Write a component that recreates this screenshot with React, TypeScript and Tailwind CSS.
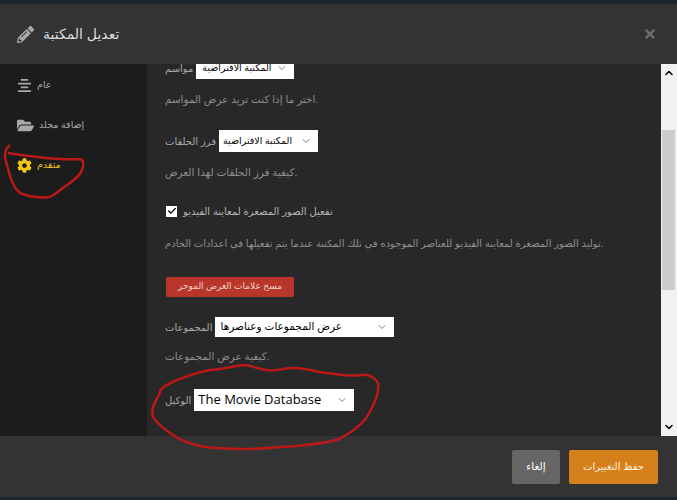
import { FaAlignCenter, FaCog, FaFolderOpen, FaPencilAlt, FaTimes } from 'react-icons/fa';
import { ChevronDown, ChevronUp, Check } from 'lucide-react';

function FakeSelect({ label, value, className, textClass }: { label: string; value: string; className: string; textClass: string }) {
  return (
    <div className="flex items-center gap-[3px]">
      <span className="whitespace-nowrap text-[10px] text-[#a9a9a9]">{label}</span>
      <div className={`flex items-center justify-between bg-white pr-[6px] text-black ${className}`}>
        <span className={`whitespace-nowrap ${textClass}`}>{value}</span>
        <ChevronDown className="h-3 w-3 text-[#555]" strokeWidth={1.5} />
      </div>
    </div>
  );
}

function SideItem({ icon, label, active }: { icon: React.ReactNode; label: string; active?: boolean }) {
  return (
    <div className={`flex h-[40px] items-center gap-[5px] pl-[17px] text-[9.5px] ${active ? 'text-[#f5c518]' : 'text-[#a9a9a9]'}`}>
      {icon}
      <span>{label}</span>
    </div>
  );
}

function Hint({ text, className }: { text: string; className: string }) {
  return <p className={`h-[16px] whitespace-nowrap leading-[16px] text-[#8f8f8f] ${className}`}>{text}</p>;
}

export default function App() {
  return (
    <div className="relative flex h-[500px] w-[677px] flex-col overflow-hidden bg-[#1a2530] font-['Liberation_Sans','DejaVu_Sans',sans-serif]">
      <div className="mt-[4px] flex h-[60px] shrink-0 items-center justify-between bg-[#333333] pl-[17px] pr-[20px]">
        <div className="flex items-center gap-[9px]">
          <FaPencilAlt className="h-[17px] w-[17px] text-[#a9a9a9]" />
          <span className="text-[14px] text-[#dcdcdc]">تعديل المكتبة</span>
        </div>
        <FaTimes className="h-[14px] w-[14px] text-[#6e6e6e]" />
      </div>

      <div className="flex h-[372px] shrink-0">
        <div className="flex w-[147px] shrink-0 flex-col bg-[#1c1c1c] pt-[1px]">
          <SideItem icon={<FaAlignCenter className="h-[15px] w-[15px] text-[#a9a9a9]" />} label="عام" />
          <SideItem icon={<FaFolderOpen className="h-[17px] w-[17px] text-[#a9a9a9]" />} label="إضافة مجلد" />
          <SideItem active icon={<FaCog className="h-[15px] w-[15px] text-[#f5c518]" />} label="متقدم" />
        </div>

        <div className="flex-1 overflow-hidden bg-[#282828] pl-[18px]">
          <div className="-mt-[7px] flex flex-col items-start">
            <FakeSelect label="مواسم" value="المكتبة الافتراضية" className="h-[22px] w-[98px] pl-[6px]" textClass="text-[9.5px]" />
            <Hint className="mt-[13px] text-[10.4px]" text="اختر ما إذا كنت تريد عرض المواسم." />
            <div className="mt-[22px]">
              <FakeSelect label="فرز الحلقات" value="المكتبة الافتراضية" className="h-[22px] w-[99px] pl-[4px]" textClass="text-[9.5px]" />
            </div>
            <Hint className="mt-[13px] text-[10.4px]" text="كيفية فرز الحلقات لهذا العرض." />
            <div className="mt-[22px] ml-[1px] flex h-[16px] items-center gap-[6px]">
              <div className="flex h-[11px] w-[11px] items-center justify-center bg-white">
                <Check className="h-[10px] w-[10px] text-black" strokeWidth={3} />
              </div>
              <span className="text-[10px] text-[#b5b5b5]">تفعيل الصور المصغرة لمعاينة الفيديو</span>
            </div>
            <Hint className="mt-[17px] text-[10px]" text="توليد الصور المصغرة لمعاينة الفيديو للعناصر الموجوده في تلك المكتبة عندما يتم تفعيلها في اعدادات الخادم." />
            <button className="mt-[25px] ml-[1px] flex h-[20px] w-[128px] items-center justify-center rounded-[2px] bg-[#b8372a] text-[9px] text-[#f0d0c8]">
              مسح علامات العرض الموجز
            </button>
            <div className="mt-[20px]">
              <FakeSelect label="المجموعات" value="عرض المجموعات وعناصرها" className="h-[20px] w-[179px] pl-[5px]" textClass="text-[10.5px]" />
            </div>
            <Hint className="mt-[12px] text-[10.4px]" text="كيفية عرض المجموعات." />
            <div className="mt-[24px]">
              <FakeSelect label="الوكيل" value="The Movie Database" className="h-[22px] w-[160px] pl-[4px]" textClass="font-['Open_Sans',sans-serif] text-[13px]" />
            </div>
          </div>
        </div>

        <div className="flex w-[16px] shrink-0 flex-col items-center justify-between bg-[#f1f1f1] py-[3px]">
          <ChevronUp className="h-3 w-3 text-black" strokeWidth={3} />
          <ChevronDown className="h-3 w-3 text-black" strokeWidth={3} />
        </div>
      </div>

      <div className="flex h-[61px] shrink-0 items-center justify-end gap-[9px] bg-[#333333] pr-[19px]">
        <button className="flex h-[34px] w-[48px] items-center justify-center rounded-[2px] bg-[#666666] text-[10.5px] text-white">إلغاء</button>
        <button className="flex h-[34px] w-[89px] items-center justify-center rounded-[2px] bg-[#d6801c] text-[10px] text-[#fff3dc]">حفظ التغييرات</button>
      </div>

      <div className="absolute left-[662px] top-[130px] h-[160px] w-[13px] bg-[#cdcdcd]" />

      <svg className="pointer-events-none absolute inset-0" width="677" height="500" fill="none" stroke="#bb1818" strokeWidth="2.5">
        <path d="M10 145 C4 150 4 156 7 165 C10 175 11 185 20 193 C30 197 42 198 50 197 C58 193 62 188 67 185 C74 180 80 176 82 170 C84 164 84 160 80 159 C65 160 40 158 8 153" />
        <path d="M245 365 C232 366 222 370 210 370 C198 372 188 376 177 380 C168 384 160 388 160 392 C157 400 150 408 153 417 C158 425 164 428 170 433 C182 442 198 447 217 448 C240 450 260 449 280 447 C300 446 320 444 337 440 C350 434 360 426 367 417 C374 405 380 392 378 383 C374 376 368 374 360 375 C350 377 338 374 327 373 C315 372 305 367 293 368 C283 368 275 372 267 370 C258 369 252 366 245 365 Z" />
      </svg>
    </div>
  );
}
